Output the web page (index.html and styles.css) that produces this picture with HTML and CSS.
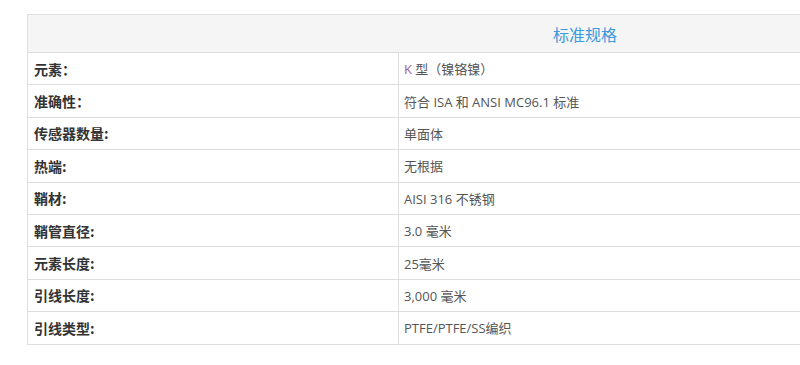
FILE: index.html
```html
<!DOCTYPE html>
<html lang="zh">
<head>
<meta charset="utf-8">
<link rel="stylesheet" href="styles.css">
</head>
<body>
<div class="wrap">
<table class="spec">
  <thead>
    <tr><th colspan="2" class="head">标准规格</th></tr>
  </thead>
  <tbody>
    <tr><td class="lbl">元素：</td><td class="val"><span class="k">K</span> 型（镍铬镍）</td></tr>
    <tr><td class="lbl">准确性：</td><td class="val">符合 ISA 和 ANSI MC96.1 标准</td></tr>
    <tr><td class="lbl">传感器数量:</td><td class="val">单面体</td></tr>
    <tr><td class="lbl">热端:</td><td class="val">无根据</td></tr>
    <tr><td class="lbl">鞘材:</td><td class="val">AISI 316 不锈钢</td></tr>
    <tr><td class="lbl">鞘管直径:</td><td class="val">3.0 毫米</td></tr>
    <tr><td class="lbl">元素长度:</td><td class="val">25毫米</td></tr>
    <tr><td class="lbl">引线长度:</td><td class="val">3,000 毫米</td></tr>
    <tr><td class="lbl">引线类型:</td><td class="val">PTFE/PTFE/SS编织</td></tr>
  </tbody>
</table>
</div>
</body>
</html>
```

FILE: styles.css
```css
html, body {
  margin: 0;
  padding: 0;
  background: #fff;
  overflow: hidden;
}
.wrap {
  padding: 14px 0 0 27px;
  width: 773px;
  overflow: hidden;
}
.spec {
  border-collapse: collapse;
  width: 1116px;
  font-family: "Open Sans", "Noto Sans CJK SC", sans-serif;
}
.spec th, .spec td {
  border: 1px solid #dedede;
  text-align: left;
}
.head {
  background: #f5f5f5;
  height: 37px;
  padding: 0;
  text-align: center !important;
  font-weight: normal;
  font-size: 16px;
  color: #3a9ae0;
  font-family: "Noto Sans CJK SC", sans-serif;
}
.lbl {
  width: 358px;
  height: 31.4px;
  padding: 0 6px;
  font-family: "Noto Sans CJK SC", sans-serif;
  font-weight: bold;
  font-size: 14px;
  color: #333;
}
.val {
  height: 31.4px;
  padding: 0 5px;
  font-size: 13px;
  color: #555;
}
.k {
  color: #a0609a;
}
```
